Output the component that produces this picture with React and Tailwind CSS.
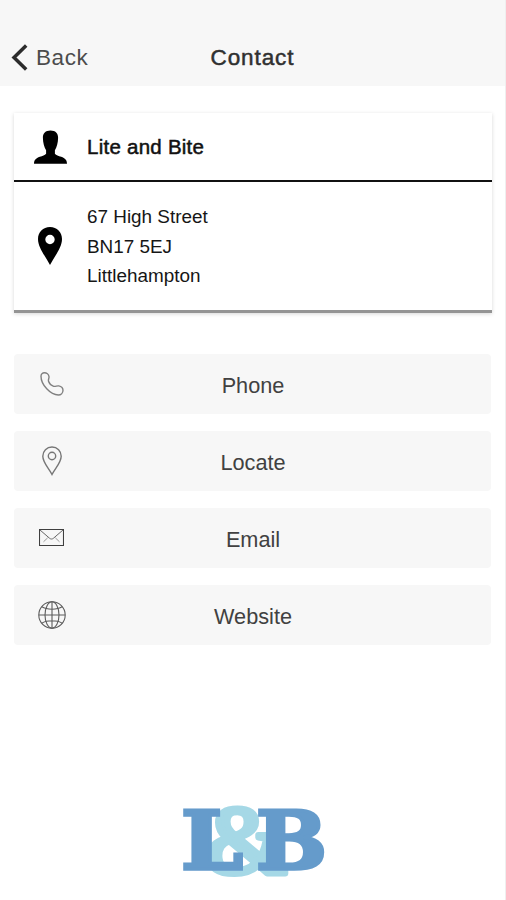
const address = ["67 High Street", "BN17 5EJ", "Littlehampton"];

const contactActions = [
  { id: "phone", label: "Phone", Icon: PhoneIcon },
  { id: "locate", label: "Locate", Icon: LocateIcon },
  { id: "email", label: "Email", Icon: EmailIcon },
  { id: "website", label: "Website", Icon: GlobeIcon }
];

export default function App() {
  return (
    <div className="flex h-[900px] w-[506px] flex-col overflow-hidden border-r border-[#efefef] bg-white font-['Liberation_Sans',Arial,sans-serif]">
      <Header />
      <main className="flex flex-1 flex-col pt-[27px] pr-[13px] pl-3.5">
        <ContactCard />
        <div className="mt-[41px] grid gap-[17px]">
          {contactActions.map((action) => (
            <ActionButton key={action.id} {...action} />
          ))}
        </div>
        <Logo />
      </main>
    </div>
  );
}

function Header() {
  return (
    <header className="grid h-[86px] shrink-0 grid-cols-3 bg-[#f7f7f7] pt-[29px] text-[22.5px] leading-[57px]">
      <button className="flex items-center pl-[11px] text-[#4c4c4c]" type="button">
        <svg className="mr-[7px] h-[27px] w-[18px]" fill="none" viewBox="0 0 18 27">
          <path d="M15.2 1.6 3 13.5l12.2 11.9" stroke="#2c2c2c" strokeWidth="3.5" />
        </svg>
        <span className="tracking-[0.6px]">Back</span>
      </button>
      <h1 className="text-center tracking-[0.9px] text-[#303030] [-webkit-text-stroke:0.5px_#303030]">Contact</h1>
    </header>
  );
}

function ContactCard() {
  return (
    <section className="h-[200px] border-b-[3px] border-[#949494] bg-white shadow-[0_1px_4px_rgba(0,0,0,0.16)]">
      <div className="flex h-[69px] items-center border-b-2 border-[#111] pl-5">
        <svg className="h-[34px] w-[33px]" viewBox="0 0 33 34">
          <path
            d="M16.5.5c4.900 0 7.700 2.800 7.600 7.300-.1 5.200-1.300 9.600-3.200 12.400v3.500c1.200 1.700 3.500 2 6.300 3.100 4 1.400 5.800 3.400 5.800 7H0c0-3.600 1.800-5.600 5.800-7 2.800-1.100 5.100-1.400 6.300-3.100v-3.500C10.200 17.400 9 13 8.900 7.800 8.800 3.300 11.600.5 16.500.5Z"
            fill="#000"
          />
        </svg>
        <h2 className="ml-5 pt-0.5 text-[20.5px] tracking-[0.25px] text-[#111] [-webkit-text-stroke:0.5px_#111]">
          Lite and Bite
        </h2>
      </div>
      <div className="flex h-32 items-center pl-6">
        <svg className="h-[38px] w-6" viewBox="0 0 24 38">
          <path
            clipRule="evenodd"
            d="M12 0c7 0 12 5.300 12 12 0 9-7.500 17-12 26C7.500 29 0 21 0 12 0 5.300 5 0 12 0Zm0 7.800a4.700 4.700 0 1 0 0 9.400 4.700 4.700 0 0 0 0-9.400Z"
            fill="#000"
            fillRule="evenodd"
          />
        </svg>
        <address className="ml-[25px] pt-px text-[18.9px] leading-[29.6px] text-[#161616] not-italic">
          {address.map((line) => (
            <p key={line}>{line}</p>
          ))}
        </address>
      </div>
    </section>
  );
}

function ActionButton({ label, Icon }) {
  return (
    <button
      className="grid h-[60px] w-[477px] grid-cols-[75px_1fr_75px] items-center rounded-sm bg-[#f7f7f7] text-[21.7px] text-[#414141]"
      type="button"
    >
      <span className="grid place-items-center">
        <Icon />
      </span>
      <span className="pt-[5px] pl-px">{label}</span>
    </button>
  );
}

function PhoneIcon() {
  return (
    <svg className="h-6 w-6" fill="none" stroke="#808080" strokeWidth="1.4" viewBox="0 0 24 24">
      <path d="M1 4.200C1 2 2.500.8 4.400.8c2.200 0 4.300 1.700 4.600 3.800.3 1.700-1 3-.5 4.700.7 2.200 3 4.300 5.200 5 1.800.5 3-.7 5-.4 2.300.5 4.300 2 4.300 4.400 0 2.800-2.200 4.700-4.600 4.700C10.500 23 1 12.800 1 4.200Z" />
    </svg>
  );
}

function LocateIcon() {
  return (
    <svg className="h-[30px] w-5" fill="none" stroke="#777" strokeWidth="1.4" viewBox="0 0 20 30">
      <path d="M10 1c5.300 0 9.200 4 9.200 9.200 0 6.300-6 12-9.200 18.300C6.800 22.200.8 16.500.8 10.200.8 5 4.700 1 10 1Z" />
      <circle cx="10" cy="10" r="3.700" />
    </svg>
  );
}

function EmailIcon() {
  return (
    <svg className="mb-0.5 h-[17px] w-[25px]" fill="none" stroke="#3f3f3f" viewBox="0 0 25 17">
      <path d="M.5.5h24v16H.5z" strokeWidth="1.100" />
      <path d="m1 1 9.500 8.200c1.300 1.100 2.700 1.100 4 0L24 1" stroke="#666" />
      <path d="m4.500 12.800 4.200-4m11.800 4-4.200-4" stroke="#999" />
    </svg>
  );
}

function GlobeIcon() {
  return (
    <svg className="mb-px h-7 w-7" fill="none" stroke="#5c5c5c" strokeWidth="1.100" viewBox="0 0 28 28">
      <circle cx="14" cy="14" r="13.200" />
      <ellipse cx="14" cy="14" rx="7" ry="13.200" />
      <path d="M14 .8v26.400M.8 14h26.400M3.800 5.800c5 3.200 15.400 3.200 20.400 0M3.800 22.200c5-3.200 15.400-3.200 20.400 0" />
    </svg>
  );
}

function Logo() {
  return (
    <svg
      className="mt-[125px] ml-[154px] h-[130px] w-[172px]"
      fontFamily="'DejaVu Serif', serif"
      fontWeight="700"
      viewBox="0 0 172 130"
    >
      <text
        fill="#a5d8e6"
        fontFamily="'Liberation Serif', serif"
        fontSize="98"
        fontWeight="400"
        lengthAdjust="spacingAndGlyphs"
        stroke="#a5d8e6"
        strokeLinejoin="round"
        strokeWidth="6"
        textLength="82"
        x="37"
        y="103"
      >
        &amp;
      </text>
      <text fill="#659bcb" fontSize="81" lengthAdjust="spacingAndGlyphs" stroke="#659bcb" strokeWidth="3.5" textLength="62" x="13" y="99">
        L
      </text>
      <text fill="#659bcb" fontSize="81" lengthAdjust="spacingAndGlyphs" stroke="#659bcb" strokeWidth="3.5" textLength="71" x="88" y="99">
        B
      </text>
    </svg>
  );
}
